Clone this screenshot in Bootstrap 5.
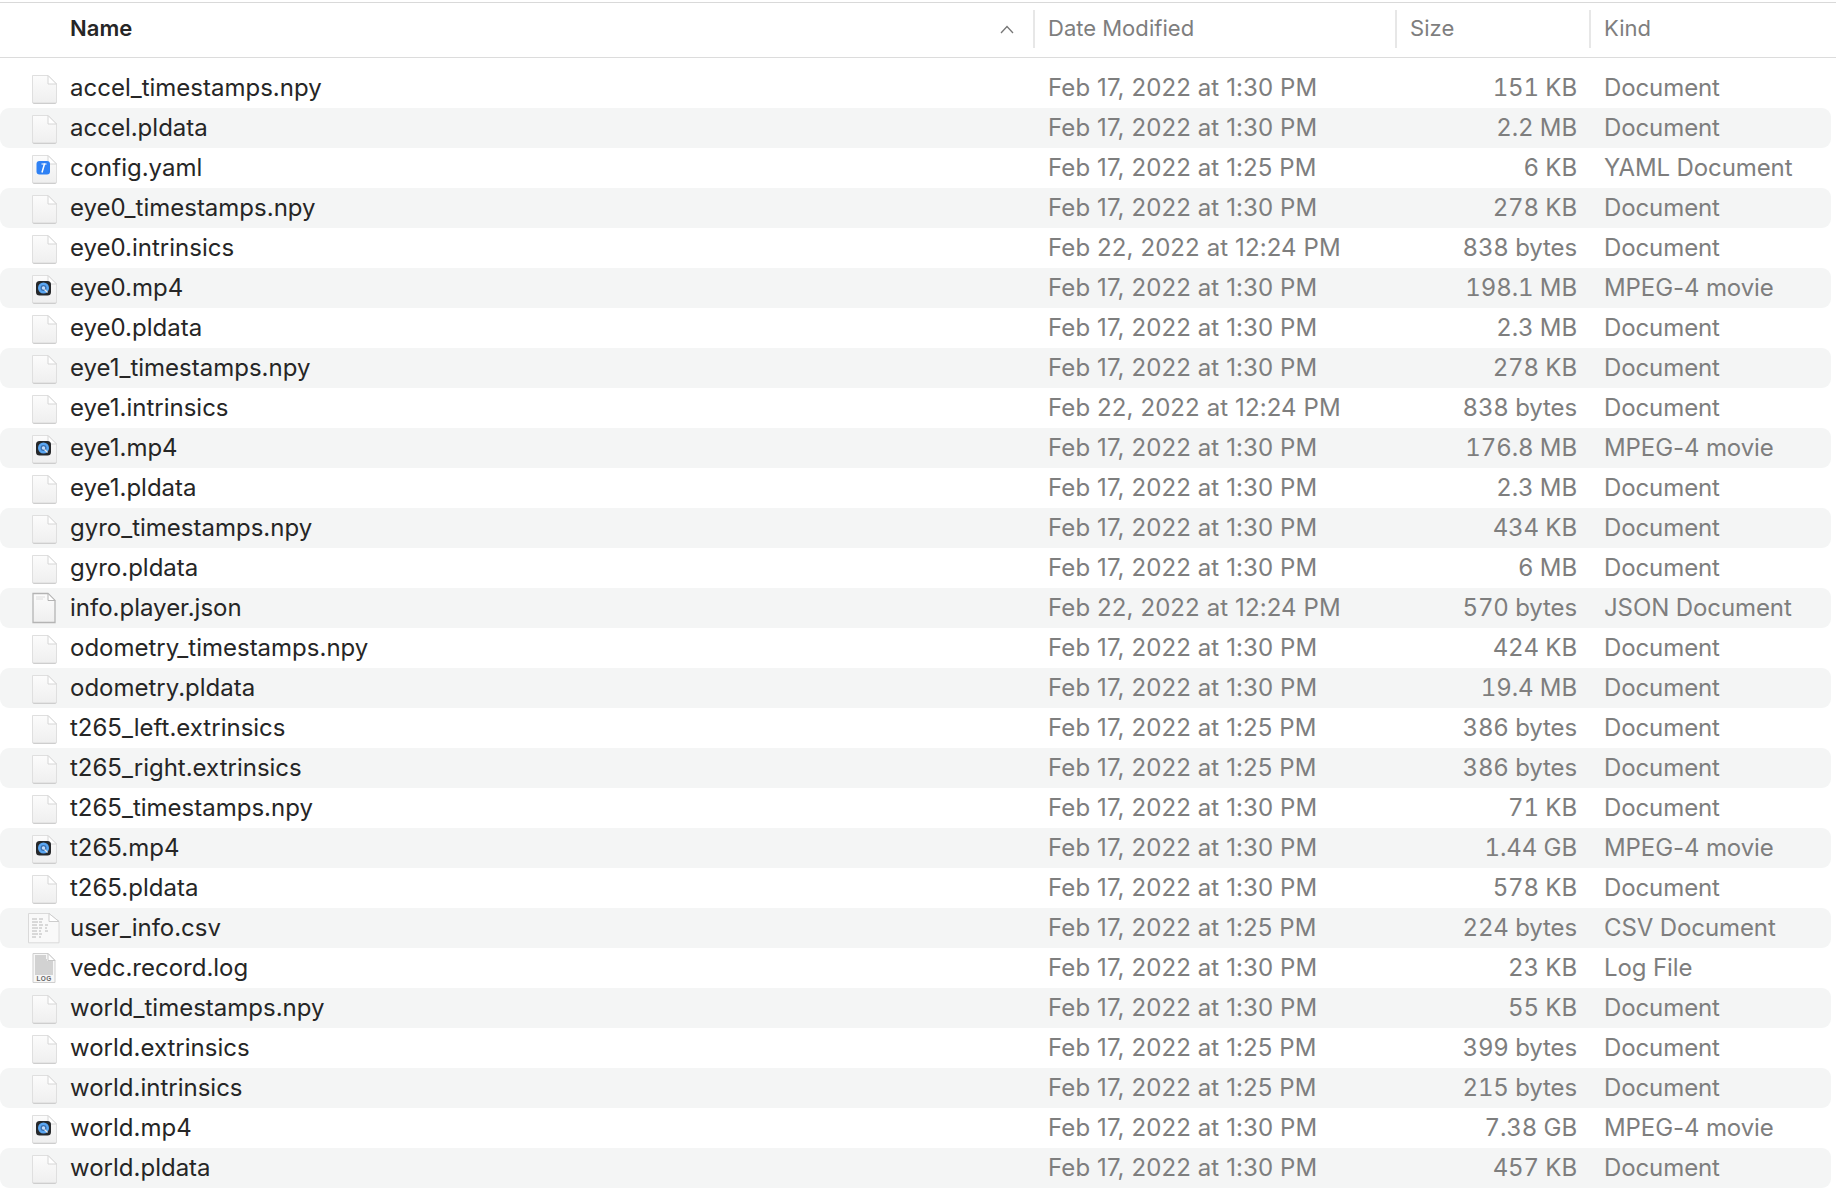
<!DOCTYPE html>
<html lang="en">
<head>
<meta charset="utf-8">
<title>Finder list</title>
<link href="https://cdn.jsdelivr.net/npm/bootstrap@5.3.0/dist/css/bootstrap.min.css" rel="stylesheet">
<style>
html,body{height:1196px;overflow:hidden;background:#fff}
body{font-family:Inter,"Liberation Sans",sans-serif;font-size:24px;color:#262626;letter-spacing:-.1px}
.finder-head{height:52px;margin-top:2px;padding-bottom:2px;border-top:1px solid #d9d9d9;border-bottom:1px solid #dcdcdc;box-sizing:content-box;color:#7e7e7e;font-size:22px;letter-spacing:.05px;font-variant-numeric:tabular-nums}
.finder-rows{padding-top:10px}
.finder-row{height:40px;width:1831px;border-radius:0 9px 9px 0;color:#7e7e7e}
.finder-row:nth-child(even){background:#f4f5f5;border-radius:9px}
.c-icon{width:70px;flex:none}
.c-name{width:963px;flex:none}
.c-date{width:375px;flex:none;padding-left:15px;letter-spacing:.1px}
.c-size{width:169px;flex:none;text-align:right;font-variant-numeric:tabular-nums}
.c-kind{padding-left:27px;white-space:nowrap}
.name-txt{color:#262626;letter-spacing:0}
.th-name{color:#262626;font-weight:600;margin-bottom:2px}
.th-sep{border-left:2px solid #e7e7e7;height:38px;padding-bottom:2px}
.th-date{width:362px;flex:none;padding-left:13px}
.th-size{width:194px;flex:none;padding-left:13px}
.th-kind{padding-left:13px}
.th-namecell{width:963px;flex:none}
.sort-ico{width:14px;height:9px;margin-right:19px}
.file-ico{width:32px;height:32px;margin-left:28px;display:block;overflow:visible}
.ico-label{font-family:"Liberation Sans",sans-serif;font-size:6.500px;font-weight:700;fill:#666;letter-spacing:.3px}
</style>
</head>
<body>
<svg width="0" height="0" class="position-absolute">
<defs>
<linearGradient id="pg" x1="0" y1="0" x2="0" y2="1"><stop offset="0" stop-color="#fcfcfc"/><stop offset="1" stop-color="#efefef"/></linearGradient>
<symbol id="sheet" viewBox="0 0 32 32">
<path d="M4.500 3.500H20L28.500 12V30a.8.8 0 0 1-.8.8H5.300a.8.8 0 0 1-.8-.8Z" fill="url(#pg)" stroke="#dfdfdf" stroke-width="1"/>
<path d="M4.800 30.600a1 1 0 0 0 1 .9h21.400a1 1 0 0 0 1-.9" fill="none" stroke="#cecece" stroke-width="1"/>
<path d="M20 3.500V12h8.500Z" fill="#fff" stroke="#d6d6d6" stroke-width="1"/>
</symbol>
<symbol id="json" viewBox="0 0 32 32">
<path d="M5 1.500H20L27 8.500V30.500H5Z" fill="url(#pg)" stroke="#b4b4b4" stroke-width="1.300"/>
<path d="M20 1.500V8.500h7Z" fill="#fff" stroke="#b4b4b4" stroke-width="1"/>
<path d="M8 5h9M8 7h7" stroke="#dedede"/>
</symbol>
<symbol id="yaml" viewBox="0 0 32 32">
<use href="#sheet" width="32" height="32"/>
<rect x="8.500" y="9" width="13.500" height="13.500" rx="3" fill="#2f81f4"/>
<path d="M16.600 11.500 14 20.500" stroke="#fff" stroke-width="1.500"/>
<path d="M13.500 12h5" stroke="#fff" stroke-width="1.100"/>
</symbol>
<symbol id="movie" viewBox="0 0 32 32">
<use href="#sheet" width="32" height="32"/>
<rect x="8" y="9" width="15" height="14.500" rx="3.500" fill="#26282b"/>
<circle cx="15.500" cy="16" r="5.500" fill="#5aa6f2"/>
<circle cx="15.500" cy="16" r="3" fill="#3a6fae"/>
<circle cx="15.500" cy="16" r="1.700" fill="#c4dcf9"/>
<path d="M16.500 17.500l3 3" stroke="#ececec" stroke-width="1.300"/>
</symbol>
<symbol id="csv" viewBox="0 0 32 32">
<path d="M.5 1.500H21L31 9.500V30.800H.5Z" fill="#f9f9f9" stroke="#dadada"/>
<path d="M21 1.500V9.500H31Z" fill="#fff" stroke="#cdcdcd"/>
<path d="M4 7h5M11 7h4M4 10h6M11 10h3M4 13h5M11 13h4M17 13h3M4 16h6M11 16h3M17 16h2M4 19h5M11 19h2M17 19h3M4 22h6M11 22h3M4 25h4M11 25h2" stroke="#b8b8b8" stroke-width="1"/>
</symbol>
<symbol id="logf" viewBox="0 0 32 32">
<path d="M5 1.500H20L27 8.500V30.500H5Z" fill="#f7f7f7" stroke="#cfcfcf"/>
<path d="M20 1.500V8.500h7Z" fill="#fff" stroke="#c6c6c6"/>
<path d="M7 4h11M7 6h11M7 8h12M7 10h18M7 12h18M7 14h18M7 16h18M7 18h18M7 20h18M7 22h18" stroke="#adadad" stroke-width="1.200"/>
</symbol>
</defs>
</svg>

<div class="finder-head d-flex align-items-center">
<div class="c-icon"></div>
<div class="th-namecell d-flex align-items-center justify-content-between"><span class="th-name">Name</span><svg class="sort-ico" viewBox="0 0 14 9"><path d="M1 8 7 1.500 13 8" fill="none" stroke="#777" stroke-width="1.300"/></svg></div>
<div class="th-sep th-date d-flex align-items-center">Date Modified</div>
<div class="th-sep th-size d-flex align-items-center">Size</div>
<div class="th-sep th-kind d-flex align-items-center">Kind</div>
</div>

<div class="finder-rows">
<div class="finder-row d-flex align-items-center"><div class="c-icon"><svg class="file-ico"><use href="#sheet"/></svg></div><div class="c-name name-txt">accel_timestamps.npy</div><div class="c-date">Feb 17, 2022 at 1:30 PM</div><div class="c-size">151 KB</div><div class="c-kind">Document</div></div>
<div class="finder-row d-flex align-items-center"><div class="c-icon"><svg class="file-ico"><use href="#sheet"/></svg></div><div class="c-name name-txt">accel.pldata</div><div class="c-date">Feb 17, 2022 at 1:30 PM</div><div class="c-size">2.2 MB</div><div class="c-kind">Document</div></div>
<div class="finder-row d-flex align-items-center"><div class="c-icon"><svg class="file-ico"><use href="#yaml"/></svg></div><div class="c-name name-txt">config.yaml</div><div class="c-date">Feb 17, 2022 at 1:25 PM</div><div class="c-size">6 KB</div><div class="c-kind">YAML Document</div></div>
<div class="finder-row d-flex align-items-center"><div class="c-icon"><svg class="file-ico"><use href="#sheet"/></svg></div><div class="c-name name-txt">eye0_timestamps.npy</div><div class="c-date">Feb 17, 2022 at 1:30 PM</div><div class="c-size">278 KB</div><div class="c-kind">Document</div></div>
<div class="finder-row d-flex align-items-center"><div class="c-icon"><svg class="file-ico"><use href="#sheet"/></svg></div><div class="c-name name-txt">eye0.intrinsics</div><div class="c-date">Feb 22, 2022 at 12:24 PM</div><div class="c-size">838 bytes</div><div class="c-kind">Document</div></div>
<div class="finder-row d-flex align-items-center"><div class="c-icon"><svg class="file-ico"><use href="#movie"/></svg></div><div class="c-name name-txt">eye0.mp4</div><div class="c-date">Feb 17, 2022 at 1:30 PM</div><div class="c-size">198.1 MB</div><div class="c-kind">MPEG-4 movie</div></div>
<div class="finder-row d-flex align-items-center"><div class="c-icon"><svg class="file-ico"><use href="#sheet"/></svg></div><div class="c-name name-txt">eye0.pldata</div><div class="c-date">Feb 17, 2022 at 1:30 PM</div><div class="c-size">2.3 MB</div><div class="c-kind">Document</div></div>
<div class="finder-row d-flex align-items-center"><div class="c-icon"><svg class="file-ico"><use href="#sheet"/></svg></div><div class="c-name name-txt">eye1_timestamps.npy</div><div class="c-date">Feb 17, 2022 at 1:30 PM</div><div class="c-size">278 KB</div><div class="c-kind">Document</div></div>
<div class="finder-row d-flex align-items-center"><div class="c-icon"><svg class="file-ico"><use href="#sheet"/></svg></div><div class="c-name name-txt">eye1.intrinsics</div><div class="c-date">Feb 22, 2022 at 12:24 PM</div><div class="c-size">838 bytes</div><div class="c-kind">Document</div></div>
<div class="finder-row d-flex align-items-center"><div class="c-icon"><svg class="file-ico"><use href="#movie"/></svg></div><div class="c-name name-txt">eye1.mp4</div><div class="c-date">Feb 17, 2022 at 1:30 PM</div><div class="c-size">176.8 MB</div><div class="c-kind">MPEG-4 movie</div></div>
<div class="finder-row d-flex align-items-center"><div class="c-icon"><svg class="file-ico"><use href="#sheet"/></svg></div><div class="c-name name-txt">eye1.pldata</div><div class="c-date">Feb 17, 2022 at 1:30 PM</div><div class="c-size">2.3 MB</div><div class="c-kind">Document</div></div>
<div class="finder-row d-flex align-items-center"><div class="c-icon"><svg class="file-ico"><use href="#sheet"/></svg></div><div class="c-name name-txt">gyro_timestamps.npy</div><div class="c-date">Feb 17, 2022 at 1:30 PM</div><div class="c-size">434 KB</div><div class="c-kind">Document</div></div>
<div class="finder-row d-flex align-items-center"><div class="c-icon"><svg class="file-ico"><use href="#sheet"/></svg></div><div class="c-name name-txt">gyro.pldata</div><div class="c-date">Feb 17, 2022 at 1:30 PM</div><div class="c-size">6 MB</div><div class="c-kind">Document</div></div>
<div class="finder-row d-flex align-items-center"><div class="c-icon"><svg class="file-ico"><use href="#json"/></svg></div><div class="c-name name-txt">info.player.json</div><div class="c-date">Feb 22, 2022 at 12:24 PM</div><div class="c-size">570 bytes</div><div class="c-kind">JSON Document</div></div>
<div class="finder-row d-flex align-items-center"><div class="c-icon"><svg class="file-ico"><use href="#sheet"/></svg></div><div class="c-name name-txt">odometry_timestamps.npy</div><div class="c-date">Feb 17, 2022 at 1:30 PM</div><div class="c-size">424 KB</div><div class="c-kind">Document</div></div>
<div class="finder-row d-flex align-items-center"><div class="c-icon"><svg class="file-ico"><use href="#sheet"/></svg></div><div class="c-name name-txt">odometry.pldata</div><div class="c-date">Feb 17, 2022 at 1:30 PM</div><div class="c-size">19.4 MB</div><div class="c-kind">Document</div></div>
<div class="finder-row d-flex align-items-center"><div class="c-icon"><svg class="file-ico"><use href="#sheet"/></svg></div><div class="c-name name-txt">t265_left.extrinsics</div><div class="c-date">Feb 17, 2022 at 1:25 PM</div><div class="c-size">386 bytes</div><div class="c-kind">Document</div></div>
<div class="finder-row d-flex align-items-center"><div class="c-icon"><svg class="file-ico"><use href="#sheet"/></svg></div><div class="c-name name-txt">t265_right.extrinsics</div><div class="c-date">Feb 17, 2022 at 1:25 PM</div><div class="c-size">386 bytes</div><div class="c-kind">Document</div></div>
<div class="finder-row d-flex align-items-center"><div class="c-icon"><svg class="file-ico"><use href="#sheet"/></svg></div><div class="c-name name-txt">t265_timestamps.npy</div><div class="c-date">Feb 17, 2022 at 1:30 PM</div><div class="c-size">71 KB</div><div class="c-kind">Document</div></div>
<div class="finder-row d-flex align-items-center"><div class="c-icon"><svg class="file-ico"><use href="#movie"/></svg></div><div class="c-name name-txt">t265.mp4</div><div class="c-date">Feb 17, 2022 at 1:30 PM</div><div class="c-size">1.44 GB</div><div class="c-kind">MPEG-4 movie</div></div>
<div class="finder-row d-flex align-items-center"><div class="c-icon"><svg class="file-ico"><use href="#sheet"/></svg></div><div class="c-name name-txt">t265.pldata</div><div class="c-date">Feb 17, 2022 at 1:30 PM</div><div class="c-size">578 KB</div><div class="c-kind">Document</div></div>
<div class="finder-row d-flex align-items-center"><div class="c-icon"><svg class="file-ico"><use href="#csv"/></svg></div><div class="c-name name-txt">user_info.csv</div><div class="c-date">Feb 17, 2022 at 1:25 PM</div><div class="c-size">224 bytes</div><div class="c-kind">CSV Document</div></div>
<div class="finder-row d-flex align-items-center"><div class="c-icon"><svg class="file-ico" viewBox="0 0 32 32"><use href="#logf" width="32" height="32"/><text class="ico-label" x="16" y="29" text-anchor="middle">LOG</text></svg></div><div class="c-name name-txt">vedc.record.log</div><div class="c-date">Feb 17, 2022 at 1:30 PM</div><div class="c-size">23 KB</div><div class="c-kind">Log File</div></div>
<div class="finder-row d-flex align-items-center"><div class="c-icon"><svg class="file-ico"><use href="#sheet"/></svg></div><div class="c-name name-txt">world_timestamps.npy</div><div class="c-date">Feb 17, 2022 at 1:30 PM</div><div class="c-size">55 KB</div><div class="c-kind">Document</div></div>
<div class="finder-row d-flex align-items-center"><div class="c-icon"><svg class="file-ico"><use href="#sheet"/></svg></div><div class="c-name name-txt">world.extrinsics</div><div class="c-date">Feb 17, 2022 at 1:25 PM</div><div class="c-size">399 bytes</div><div class="c-kind">Document</div></div>
<div class="finder-row d-flex align-items-center"><div class="c-icon"><svg class="file-ico"><use href="#sheet"/></svg></div><div class="c-name name-txt">world.intrinsics</div><div class="c-date">Feb 17, 2022 at 1:25 PM</div><div class="c-size">215 bytes</div><div class="c-kind">Document</div></div>
<div class="finder-row d-flex align-items-center"><div class="c-icon"><svg class="file-ico"><use href="#movie"/></svg></div><div class="c-name name-txt">world.mp4</div><div class="c-date">Feb 17, 2022 at 1:30 PM</div><div class="c-size">7.38 GB</div><div class="c-kind">MPEG-4 movie</div></div>
<div class="finder-row d-flex align-items-center"><div class="c-icon"><svg class="file-ico"><use href="#sheet"/></svg></div><div class="c-name name-txt">world.pldata</div><div class="c-date">Feb 17, 2022 at 1:30 PM</div><div class="c-size">457 KB</div><div class="c-kind">Document</div></div>
</div>
<script src="https://cdn.jsdelivr.net/npm/bootstrap@5.3.0/dist/js/bootstrap.bundle.min.js"></script>
</body>
</html>
